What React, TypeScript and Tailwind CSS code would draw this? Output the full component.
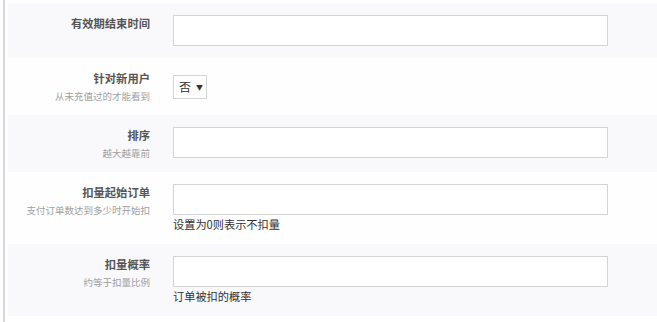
export default function App() {
  type Row = { label: string; sub?: string; help?: string; kind: "input" | "select"; shaded: boolean };

  const rows: Row[] = [
    { label: "有效期结束时间", kind: "input", shaded: true },
    { label: "针对新用户", sub: "从未充值过的才能看到", kind: "select", shaded: false },
    { label: "排序", sub: "越大越靠前", kind: "input", shaded: true },
    { label: "扣量起始订单", sub: "支付订单数达到多少时开始扣", help: "设置为0则表示不扣量", kind: "input", shaded: false },
    { label: "扣量概率", sub: "约等于扣量比例", help: "订单被扣的概率", kind: "input", shaded: true },
  ];

  return (
    <div
      className="w-[657px] h-[322px] bg-white pl-[3px] overflow-hidden"
      style={{ fontFamily: '"Noto Sans CJK SC", "Noto Sans", sans-serif' }}
    >
      <div className="h-full border-l-[2px] border-[#d9d9d9] pl-[3px] pt-[3px]">
        {rows.map((r, i) => (
          <div
            key={i}
            className={`flex items-start py-[12px] ${r.shaded ? "bg-[#f9f8fa]" : "bg-[#fefefe]"}`}
          >
            <div className="w-[142px] shrink-0 text-right">
              <div className="text-[11.3px] leading-[16px] font-bold text-[#555]">{r.label}</div>
              {r.sub && (
                <div className="mt-[3px] text-[9.5px] leading-[14px] text-[#a0a0a0]">{r.sub}</div>
              )}
            </div>
            <div className="ml-[23px] w-[435px]">
              {r.kind === "input" ? (
                <div className="h-[31px] border border-[#d4d4d4] bg-white" />
              ) : (
                <div className="mt-[5px] flex h-[24px] w-[34px] items-center border border-[#d4d4d4] bg-white pl-[5px]">
                  <span className="text-[12px] text-[#333]">否</span>
                  <span className="ml-[5px] text-[7px] text-[#333]">▼</span>
                </div>
              )}
              {r.help && (
                <div className="mt-[1px] text-[11.2px] leading-[16px] text-[#333]">{r.help}</div>
              )}
            </div>
          </div>
        ))}
      </div>
    </div>
  );
}
